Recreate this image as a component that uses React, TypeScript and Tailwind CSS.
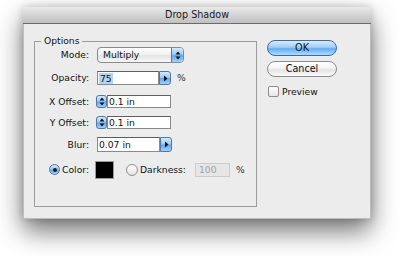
import React from 'react';

const font = { fontFamily: '"DejaVu Sans", "Noto Sans", sans-serif' };

function UpDown() {
  return (
    <svg width="6" height="9" viewBox="0 0 6 9">
      <path d="M3 0.5 L5.5 3.5 H0.5 Z" fill="#111" />
      <path d="M3 8.5 L5.5 5.5 H0.5 Z" fill="#111" />
    </svg>
  );
}

function RightArrow() {
  return (
    <svg width="5" height="7" viewBox="0 0 5 7">
      <path d="M1 0.5 L4.5 3.5 L1 6.5 Z" fill="#111" />
    </svg>
  );
}

const aquaFill = 'bg-[linear-gradient(to_bottom,#d4eafd_0%,#a0cbf5_45%,#62a6ee_55%,#a3d3fb_100%)]';
const aqua = `${aquaFill} border border-[#4f78a8]`;

function Label({ children }: { children: React.ReactNode }) {
  return <div className="w-[54px] shrink-0 text-right">{children}</div>;
}

export default function App() {
  return (
    <div className="w-[400px] h-[256px] bg-white pt-[7px] pl-[23px] text-[9.2px] text-[#111]" style={font}>
      <div className="w-[348px] h-[212px] flex flex-col shadow-[0_12px_24px_rgba(0,0,0,0.55),0_0_8px_rgba(0,0,0,0.18)]">
        {/* title bar */}
        <div className="h-[17px] shrink-0 flex items-center justify-center border-b border-[#6b6b6b] bg-[linear-gradient(to_bottom,#e9e9e9,#c0c0c0)] text-[9.6px] text-[#1a1a1a]">
          Drop Shadow
        </div>
        <div className="flex-1 bg-[#ececec] flex border-x border-b border-[#bdbdbd]">
          {/* Options group */}
          <div className="relative ml-[10px] mt-[17px] w-[223px] h-[166px] border border-[#9c9c9c] pt-[5px] flex flex-col">
            <span className="absolute -top-[7px] left-[6px] bg-[#ececec] px-[3px] leading-[12px]">Options</span>

            {/* Mode */}
            <div className="flex items-center h-[16px] gap-[8px]">
              <Label>Mode:</Label>
              <div className="flex h-[16px] w-[87px] rounded-[4px] border border-[#8a8a8a] overflow-hidden bg-[linear-gradient(to_bottom,#ffffff,#f0f0f0_50%,#e2e2e2_51%,#f7f7f7)]">
                <div className="flex-1 pl-[5px] flex items-center">Multiply</div>
                <div className={`w-[12px] flex items-center justify-center border-l border-[#4f78a8] ${aquaFill}`}>
                  <UpDown />
                </div>
              </div>
            </div>

            {/* Opacity */}
            <div className="flex items-center h-[14px] gap-[8px] mt-[8px]">
              <Label>Opacity:</Label>
              <div className="flex h-[14px]">
                <div className="w-[62px] bg-white border border-[#8a8a8a] border-t-[#5e5e5e] flex items-center pl-[1px]">
                  <span className="bg-[#b3d4f6] px-[1px] leading-[11px]">75</span>
                </div>
                <div className={`w-[12px] rounded-r-[3px] flex items-center justify-center ${aqua}`}>
                  <RightArrow />
                </div>
              </div>
              <span className="ml-[-2px] text-[#333]">%</span>
            </div>

            {/* X Offset */}
            <div className="flex items-center h-[13px] gap-[7px] mt-[10px]">
              <Label>X Offset:</Label>
              <div className="flex h-[13px]">
                <div className={`w-[11px] rounded-[3px] flex items-center justify-center ${aqua}`}>
                  <UpDown />
                </div>
                <div className="w-[64px] bg-white border border-[#8a8a8a] border-t-[#5e5e5e] flex items-center pl-[1px]">0.1 in</div>
              </div>
            </div>

            {/* Y Offset */}
            <div className="flex items-center h-[13px] gap-[7px] mt-[8px]">
              <Label>Y Offset:</Label>
              <div className="flex h-[13px]">
                <div className={`w-[11px] rounded-[3px] flex items-center justify-center ${aqua}`}>
                  <UpDown />
                </div>
                <div className="w-[64px] bg-white border border-[#8a8a8a] border-t-[#5e5e5e] flex items-center pl-[1px]">0.1 in</div>
              </div>
            </div>

            {/* Blur */}
            <div className="flex items-center h-[15px] gap-[8px] mt-[8px]">
              <Label>Blur:</Label>
              <div className="flex h-[15px]">
                <div className="w-[63px] bg-white border border-[#8a8a8a] border-t-[#5e5e5e] flex items-center pl-[1px]">0.07 in</div>
                <div className={`w-[12px] rounded-r-[3px] flex items-center justify-center ${aqua}`}>
                  <RightArrow />
                </div>
              </div>
            </div>

            {/* Color / Darkness */}
            <div className="flex items-center h-[18px] mt-[9px]">
              <div className="w-[54px] shrink-0 flex items-center justify-end gap-[2px]">
                <div className={`w-[11px] h-[11px] rounded-full flex items-center justify-center ${aqua}`}>
                  <div className="w-[4px] h-[4px] rounded-full bg-[#1a1a1a]" />
                </div>
                <span>Color:</span>
              </div>
              <div className="ml-[6px] w-[19px] h-[18px] bg-black border border-[#9a9a9a]" />
              <div className="ml-[12px] w-[12px] h-[12px] rounded-full border border-[#8d8d8d] bg-[linear-gradient(to_bottom,#ffffff,#e4e4e4)]" />
              <span className="ml-[2px]">Darkness:</span>
              <div className="ml-[9px] w-[35px] h-[14px] bg-[#e6e6e6] border border-[#cbcbcb] flex items-center pl-[3px] text-[#a0a0a0]">100</div>
              <span className="ml-[6px] text-[#333]">%</span>
            </div>
          </div>

          {/* Buttons */}
          <div className="ml-[10px] mt-[16px] flex flex-col w-[70px]">
            <div className="h-[16px] rounded-full border border-[#3e6aa0] flex items-center justify-center bg-[linear-gradient(to_bottom,#d6ecff_0%,#a0cdf7_45%,#66acf0_55%,#aedcfd_100%)] text-[9.6px]">
              OK
            </div>
            <div className="h-[16px] mt-[5px] rounded-full border border-[#8c8c8c] flex items-center justify-center bg-[linear-gradient(to_bottom,#ffffff_0%,#f4f4f4_45%,#e4e4e4_55%,#fafafa_100%)] text-[9.6px]">
              Cancel
            </div>
            <div className="flex items-center mt-[8px] ml-[1px] gap-[3px]">
              <div className="w-[11px] h-[11px] rounded-[2px] border border-[#8d8d8d] bg-[linear-gradient(to_bottom,#ffffff,#e6e6e6)]" />
              <span>Preview</span>
            </div>
          </div>
        </div>
      </div>
    </div>
  );
}
